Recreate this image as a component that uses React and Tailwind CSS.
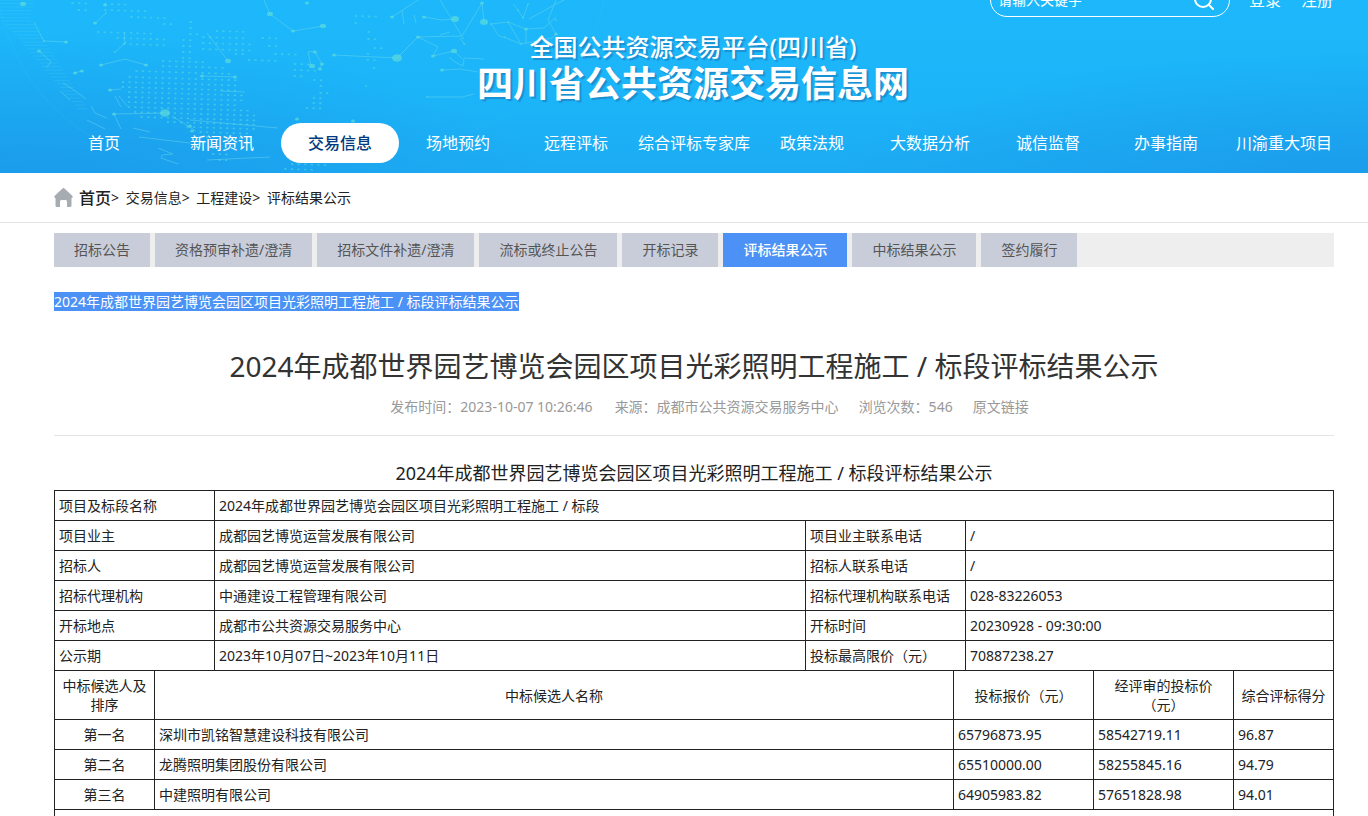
import React from 'react';
import { Search } from 'lucide-react';

const navItems = [
  '首页',
  '新闻资讯',
  '交易信息',
  '场地预约',
  '远程评标',
  '综合评标专家库',
  '政策法规',
  '大数据分析',
  '诚信监督',
  '办事指南',
  '川渝重大项目',
];

const tabs = [
  '招标公告',
  '资格预审补遗/澄清',
  '招标文件补遗/澄清',
  '流标或终止公告',
  '开标记录',
  '评标结果公示',
  '中标结果公示',
  '签约履行',
];

const title = '2024年成都世界园艺博览会园区项目光彩照明工程施工 / 标段评标结果公示';

const infoRows = [
  ['项目业主', '成都园艺博览运营发展有限公司', '项目业主联系电话', '/'],
  ['招标人', '成都园艺博览运营发展有限公司', '招标人联系电话', '/'],
  ['招标代理机构', '中通建设工程管理有限公司', '招标代理机构联系电话', '028-83226053'],
  ['开标地点', '成都市公共资源交易服务中心', '开标时间', '20230928 - 09:30:00'],
  ['公示期', '2023年10月07日~2023年10月11日', '投标最高限价（元）', '70887238.27'],
];

const bidders = [
  ['第一名', '深圳市凯铭智慧建设科技有限公司', '65796873.95', '58542719.11', '96.87'],
  ['第二名', '龙腾照明集团股份有限公司', '65510000.00', '58255845.16', '94.79'],
  ['第三名', '中建照明有限公司', '64905983.82', '57651828.98', '94.01'],
];

// dotted continents: [y, first x, last x]
const dotRows = [
  [3, 72, 90], [4, 104, 125], [10, 82, 90], [10, 104, 147], [17, 135, 170], [24, 162, 172],
  [22, 191, 192], [28, 191, 192], [34, 191, 202],
  [32, 102, 158], [38, 116, 166], [44, 128, 170], [31, 215, 242], [37, 206, 248], [43, 206, 254],
  [49, 206, 258], [38, 264, 283], [46, 270, 282], [54, 240, 252], [60, 248, 278], [54, 277, 298],
  [40, 183, 192], [46, 183, 194], [52, 183, 194], [58, 183, 194], [61, 162, 206], [66, 162, 224],
  [71, 138, 232], [77, 131, 238], [82, 128, 242], [87, 128, 244], [92, 130, 246], [97, 131, 246],
  [102, 134, 246], [107, 134, 256], [112, 138, 260], [117, 148, 262], [122, 170, 256], [127, 190, 256],
  [132, 204, 252], [137, 212, 248], [148, 220, 238], [154, 220, 236], [160, 222, 230],
  [64, 294, 312], [70, 296, 322], [76, 296, 308], [80, 318, 328], [86, 322, 328], [93, 322, 332],
  [98, 318, 328], [103, 318, 328], [108, 308, 324], [16, 356, 378], [23, 356, 358], [32, 371, 372],
  [39, 368, 378], [48, 374, 384], [54, 371, 374], [60, 369, 378], [68, 373, 376],
  [164, 296, 330], [169, 290, 320],
];

const lines = [
  'M106 13L95 23', 'M264 0L270 14L293 31L323 26', 'M124 32L125 43L115 52', 'M34 22L44 41L66 42',
  'M101 65L125 59L146 65', 'M207 33L228 61', 'M202 76L235 77', 'M334 55L397 58L418 37L438 47L433 56',
  'M392 17L424 -4', 'M424 17L442 20L455 19', 'M418 37L462 36L482 3', 'M440 0L462 36', 'M433 56L454 51L464 60L463 66L455 62L449 57',
  'M442 70L460 69L478 72', 'M464 58L484 59', 'M114 114L165 113', 'M114 114L121 129', 'M91 106L95 113L107 118', 'M110 90L121 89',
  'M115 96L121 107', 'M119 96L127 106', 'M308 52L311 66', 'M315 52L322 64L319 69', 'M308 52L315 51', 'M74 73L82 71',
  'M491 24L508 22L526 29L544 28L556 17', 'M491 24L499 36L506 38L521 44L552 38L556 34', 'M508 22L521 44',
  'M526 29L526 44', 'M482 3L484 22', 'M513 4L518 10L523 18L528 4', 'M529 19L556 4L564 0', 'M556 0L548 20L556 34',
  'M190 120L278 128', 'M87 120L105 129', 'M172 116L196 131', 'M158 148L173 154L162 155L161 158L178 164',
  'M427 97L462 97L474 94', 'M402 10L404 24', 'M414 15L416 23', 'M440 35L450 32', 'M460 38L465 45',
  'M139 137L190 143', 'M133 128L150 132', 'M220 91L245 92', 'M63 83L74 90L86 99', 'M60 91L70 100', 'M39 51L51 62L46 68',
  'M207 160L270 157',
];

const nodes = [
  [23, 4, 3], [105, 5, 2], [106, 13, 1], [95, 23, 2], [270, 14, 3], [293, 31, 2], [323, 26, 3], [307, 3, 2],
  [66, 42, 2], [44, 41, 1], [39, 51, 2], [101, 65, 2], [146, 65, 2], [125, 43, 1], [115, 52, 1], [228, 61, 3],
  [202, 76, 2], [235, 77, 2], [165, 113, 5], [114, 114, 2], [75, 73, 2], [82, 71, 2], [334, 55, 2], [397, 58, 5],
  [418, 37, 2], [392, 17, 2], [424, 17, 2], [455, 19, 4], [484, 22, 4], [433, 56, 2], [454, 51, 3], [482, 3, 2],
  [312, 66, 3], [322, 64, 2], [320, 69, 2], [315, 52, 2], [366, 86, 1], [110, 90, 2], [464, 44, 1], [463, 38, 1],
  [526, 29, 2], [508, 22, 1], [556, 34, 2], [491, 24, 1], [528, 4, 1], [518, 10, 1], [442, 70, 2], [427, 97, 1],
  [297, 119, 2], [353, 121, 2], [190, 126, 2], [192, 131, 2], [505, 37, 1], [521, 44, 1], [556, 20, 1], [523, 18, 1],
];

const hatches = Array.from({ length: 32 }, (_, i) => ({
  x: Math.max(0, i * 3 - 15),
  y: i * 3.5,
  length: 34 - i * 0.8,
}));

const columnGap = 6.6;

const GlobeArt = () => {
  const dots = dotRows.flatMap(([y, from, to]) => {
    const list = [];
    // columns line up from row to row and lean slightly left further down
    const start = Math.round(from / columnGap) * columnGap - y * 0.03;
    const count = Math.floor((to - from) / columnGap);
    for (let i = 0; i <= count; i += 1) {
      list.push([start + i * columnGap, y + i * 0.2]);
    }
    return list;
  });

  return (
    <svg className="absolute top-0 left-0" width="620" height="173" viewBox="0 0 620 173" fill="none" aria-hidden="true">
      <g stroke="#6fdcea" strokeWidth="1" opacity="0.45">
        {lines.map((d) => (
          <path key={d} d={d} />
        ))}
        <path d="M-4 -10C10 70 50 115 112 150" opacity="0.25" />
        <path d="M604 0C590 70 540 110 420 150" opacity="0.15" />
      </g>
      <g stroke="#58d8e8" opacity="0.2">
        {hatches.map(({ x, y, length }) => (
          <path key={y} d={`M${x} ${y}h${length}`} />
        ))}
      </g>
      <g fill="#55d8e2" opacity="0.6">
        {dots.map(([x, y], i) => (
          <ellipse key={i} cx={x} cy={y} rx="1.3" ry="0.9" />
        ))}
      </g>
      <g fill="#5cdcdc" opacity="0.7">
        {nodes.map(([x, y, r]) => (
          <ellipse key={`${x}-${y}`} cx={x} cy={y} rx={r} ry={r * 0.75} />
        ))}
      </g>
    </svg>
  );
};

const Header = () => (
  <header className="relative overflow-hidden bg-[radial-gradient(ellipse_40%_90%_at_0%_110%,#1b9bea_0%,transparent_100%),radial-gradient(ellipse_40%_80%_at_100%_110%,#1b9bea_0%,transparent_100%),linear-gradient(180deg,#1db8fb_0%,#1cb4f8_60%,#1cabf3_100%)] pb-[10px] text-white">
    <GlobeArt />
    <div className="relative -mt-[18px] flex items-center justify-end pr-[35px] text-base leading-6">
      <form className="flex h-[35px] w-[240px] items-center rounded-[17px] border border-white pr-[13px] pl-[7px]">
        <input
          type="text"
          aria-label="请输入关键字"
          placeholder="请输入关键字"
          className="min-w-0 flex-1 bg-transparent text-sm text-white outline-none placeholder:text-white"
        />
        <button type="button" aria-label="搜索">
          <Search className="size-6" strokeWidth={2} />
        </button>
      </form>
      <a href="#" className="ml-[19px]">登录</a>
      <a href="#" className="ml-5">注册</a>
    </div>
    <div className="relative mt-[14px] pl-[18px] text-center">
      <p className="text-2xl leading-8 font-medium [text-shadow:2px_2px_1px_#1a8fd0]">全国公共资源交易平台(四川省)</p>
      <h1 className="mt-px text-4xl leading-10 font-bold [text-shadow:2px_2px_1px_#1a8fd0]">四川省公共资源交易信息网</h1>
    </div>
    <nav className="relative mt-[19px] flex pr-[25px] pl-[45px]">
      {navItems.map((item) => (
        <a
          key={item}
          href="#"
          className={`flex-1 basis-0 rounded-full text-center text-base leading-10 whitespace-nowrap ${
            item === '交易信息' ? 'bg-white font-medium text-[#003a80]' : ''
          }`}
        >
          {item}
        </a>
      ))}
    </nav>
  </header>
);

const Breadcrumb = () => (
  <div className="flex h-[50px] items-center border-b border-[#e4e4e4] pl-[54px] text-sm">
    <svg width="19" height="19" viewBox="0 0 19 19" fill="#a7abb2" aria-hidden="true">
      <path d="M8.500 0.500Q9.500 -0.500 10.500 0.500L18.500 8Q19 10 17.500 10V17.500Q17.500 19 16 19H13V13.500Q13 12 11.500 12H7.500Q6 12 6 13.500V19H3Q1.500 19 1.500 17.500V10Q0 10 0.500 8Z" />
    </svg>
    <a href="#" className="ml-[6px] text-base font-medium">首页</a>
    <span className="mr-[3px]">&gt;&nbsp;</span>
    <a href="#">交易信息</a>
    <span className="mr-[3px]">&gt;&nbsp;</span>
    <a href="#">工程建设</a>
    <span className="mr-[3px]">&gt;&nbsp;</span>
    <a href="#">评标结果公示</a>
  </div>
);

const cell = 'border border-[#222] px-1 py-[5px]';

const ResultTable = () => (
  <>
    <table className="w-full table-fixed border-collapse text-sm leading-[19px]">
      <colgroup>
        <col className="w-[160px]" />
        <col />
        <col className="w-[160px]" />
        <col className="w-[368px]" />
      </colgroup>
      <tbody>
        <tr>
          <td className={cell}>项目及标段名称</td>
          <td className={cell} colSpan={3}>2024年成都世界园艺博览会园区项目光彩照明工程施工 / 标段</td>
        </tr>
        {infoRows.map((row) => (
          <tr key={row[0]}>
            {row.map((text, i) => (
              <td key={i} className={cell}>{text}</td>
            ))}
          </tr>
        ))}
      </tbody>
    </table>
    <table className="-mt-px w-full table-fixed border-collapse text-sm leading-[19px]">
      <colgroup>
        <col className="w-[100px]" />
        <col />
        <col className="w-[140px]" />
        <col className="w-[140px]" />
        <col className="w-[100px]" />
      </colgroup>
      <thead>
        <tr>
          {['中标候选人及排序', '中标候选人名称', '投标报价（元）', '经评审的投标价（元）', '综合评标得分'].map((text) => (
            <th key={text} className={`${cell} text-center font-normal`}>{text}</th>
          ))}
        </tr>
      </thead>
      <tbody>
        {bidders.map((row) => (
          <tr key={row[0]}>
            {row.map((text, i) => (
              <td key={i} className={`${cell} ${i === 0 ? 'text-center' : ''}`}>{text}</td>
            ))}
          </tr>
        ))}
        <tr>
          <td className="h-[30px] border border-[#222]" colSpan={5}></td>
        </tr>
      </tbody>
    </table>
  </>
);

const App = () => {
  return (
    <div className="h-screen overflow-hidden bg-white font-['Noto_Sans','Noto_Sans_CJK_SC',sans-serif] text-[#222]">
      <Header />
      <Breadcrumb />
      <main className="pt-[10px] pr-[34px] pl-[54px]">
        <div className="flex gap-[5px] bg-[#eee] text-sm leading-[34px]">
          {tabs.map((tab) => (
            <button
              key={tab}
              type="button"
              className={`px-5 whitespace-nowrap ${
                tab === '评标结果公示' ? 'bg-[#4c91f5] font-medium text-white' : 'bg-[#c9cdd9] text-[#555]'
              }`}
            >
              {tab}
            </button>
          ))}
        </div>
        <div className="mt-[25px] flex text-sm leading-[19px]">
          <span className="bg-[#4c91f5] text-white">{title}</span>
        </div>
        <h2 className="mt-[35px] text-center text-[28px] leading-10 text-[#333]">{title}</h2>
        <div className="mt-[11px] flex justify-center border-b border-[#e4e4e4] pb-[18px] pl-[31px] text-sm leading-5 text-[#999]">
          <span>发布时间：2023-10-07 10:26:46</span>
          <span className="ml-[22px]">来源：成都市公共资源交易服务中心</span>
          <span className="ml-5">浏览次数：546</span>
          <a href="#" className="ml-5">原文链接</a>
        </div>
        <p className="mt-[25px] mb-[5px] text-center text-lg leading-6">{title}</p>
        <ResultTable />
      </main>
    </div>
  );
};

export default App;
